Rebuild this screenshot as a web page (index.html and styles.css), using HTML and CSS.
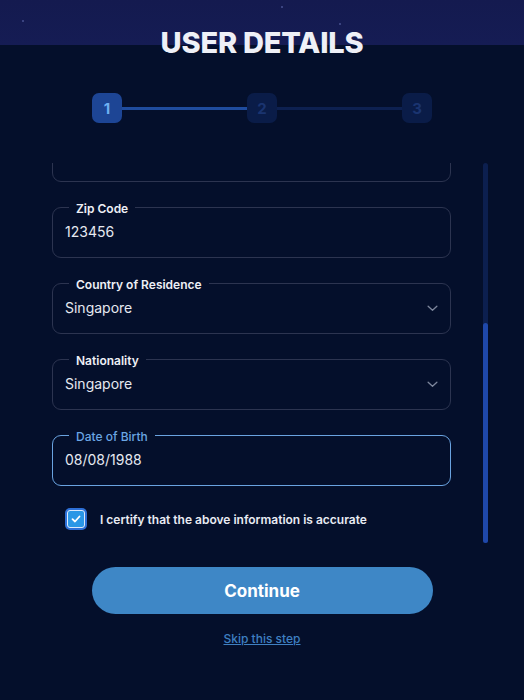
FILE: index.html
```html
<!DOCTYPE html>
<html lang="en">
<head>
<meta charset="utf-8">
<title>User Details</title>
<link rel="stylesheet" href="styles.css">
</head>
<body>
<div class="page">
  <header class="banner">
    <span class="star s1"></span><span class="star s2"></span><span class="star s3"></span>
  </header>
  <h1 class="title">USER DETAILS</h1>
  <div class="stepper">
    <div class="step active">1</div>
    <div class="line done"></div>
    <div class="step">2</div>
    <div class="line"></div>
    <div class="step">3</div>
  </div>
  <div class="scroll-wrap">
    <div class="viewport">
      <div class="form">
        <div class="field hidden-top"><span class="value">&nbsp;</span></div>
        <div class="field">
          <span class="label">Zip Code</span>
          <span class="value">123456</span>
        </div>
        <div class="field">
          <span class="label">Country of Residence</span>
          <span class="value">Singapore</span>
          <svg class="chev" viewBox="0 0 12 8" width="11" height="7"><path d="M1 1.5 L6 6 L11 1.5" fill="none" stroke="#7d869c" stroke-width="1.5" stroke-linecap="round" stroke-linejoin="round"/></svg>
        </div>
        <div class="field">
          <span class="label">Nationality</span>
          <span class="value">Singapore</span>
          <svg class="chev" viewBox="0 0 12 8" width="11" height="7"><path d="M1 1.5 L6 6 L11 1.5" fill="none" stroke="#7d869c" stroke-width="1.5" stroke-linecap="round" stroke-linejoin="round"/></svg>
        </div>
        <div class="field focus">
          <span class="label">Date of Birth</span>
          <span class="value">08/08/1988</span>
        </div>
        <label class="check">
          <span class="box"><svg viewBox="0 0 12 12" width="10" height="10"><path d="M2.5 6.2 L5 8.5 L9.5 3.5" fill="none" stroke="#fff" stroke-width="1.8" stroke-linecap="round" stroke-linejoin="round"/></svg></span>
          <span class="check-text">I certify that the above information is accurate</span>
        </label>
      </div>
    </div>
    <div class="scrollbar"><div class="thumb"></div></div>
  </div>
  <button class="continue">Continue</button>
  <a class="skip" href="#">Skip this step</a>
</div>
</body>
</html>
```
FILE: styles.css
```css
* { box-sizing: border-box; }
html, body { margin: 0; padding: 0; }
body {
  background: #040f2b;
  font-family: "Inter", "Noto Sans", sans-serif;
  color: #e9ecf4;
}
.page {
  width: 524px;
  height: 700px;
  position: relative;
  overflow: hidden;
  display: flex;
  flex-direction: column;
  align-items: center;
}
.banner {
  position: absolute;
  left: 0; top: 0;
  width: 524px;
  height: 45px;
  background: linear-gradient(180deg, #141a4f 0%, #151c54 100%);
}
.star { position: absolute; width: 2px; height: 2px; background: #3a4380; }
.s1 { left: 22px; top: 20px; }
.s2 { left: 281px; top: 6px; }
.s3 { left: 339px; top: 23px; }
.title {
  position: relative;
  margin: 27px 0 0;
  font-size: 29px;
  line-height: 32px;
  font-weight: 800;
  letter-spacing: -0.2px;
  color: #eef0f7;
}
.stepper {
  margin-top: 34px;
  display: flex;
  align-items: center;
  width: 340px;
}
.step {
  width: 30px;
  height: 30px;
  border-radius: 7px;
  background: #0a1c48;
  color: #1a3470;
  font-weight: 700;
  font-size: 15px;
  display: flex;
  align-items: center;
  justify-content: center;
  flex: none;
}
.step.active { background: #1d4595; color: #6fb0f2; }
.line { flex: 1; height: 3px; background: #0d2050; }
.line.done { background: #1f4c9e; }
.scroll-wrap {
  margin-top: 40px;
  align-self: stretch;
  display: flex;
  padding-left: 52px;
  height: 383px;
}
.viewport {
  width: 399px;
  overflow: hidden;
  height: 383px;
}
.form {
  margin-top: -32px;
  display: flex;
  flex-direction: column;
  gap: 25px;
}
.field {
  position: relative;
  height: 51px;
  border: 1px solid #2c3450;
  border-radius: 9px;
  display: flex;
  align-items: center;
  padding: 0 12px;
}
.field.focus { border-color: #6aa3e0; }
.label {
  position: absolute;
  top: -7px;
  left: 16px;
  padding: 0 7px;
  background: #040f2b;
  font-size: 12px;
  line-height: 16px;
  font-weight: 600;
  color: #eef0f6;
}
.field.focus .label { color: #6ba6e4; font-weight: 500; }
.value {
  font-size: 14px;
  color: #e6e9f1;
  margin-top: -2px;
}
.chev { position: absolute; right: 12px; top: 21px; }
.check {
  display: flex;
  align-items: center;
  gap: 13px;
  padding-left: 13px;
  margin-top: -3px;
}
.box {
  width: 22px;
  height: 22px;
  border-radius: 5px;
  background: #2d6fd6;
  padding: 2px;
  display: flex;
}
.box svg {
  flex: 1;
  width: auto;
  height: auto;
  border-radius: 3px;
  border: 1px solid #dbe9fb;
  background: #2a97e6;
  padding: 2px;
}
.check-text { font-size: 12px; font-weight: 600; color: #e8ebf3; }
.scrollbar {
  margin-left: 32px;
  width: 5px;
  height: 380px;
  border-radius: 3px;
  background: #0c1f4f;
  display: flex;
  flex-direction: column;
  justify-content: flex-end;
}
.thumb { height: 220px; border-radius: 3px; background: #1f48aa; }
.continue {
  margin-top: 21px;
  width: 341px;
  height: 47px;
  border: none;
  border-radius: 24px;
  background: #3e87c6;
  color: #fff;
  font-family: inherit;
  font-size: 17px;
  font-weight: 700;
}
.skip {
  margin-top: 17px;
  font-size: 12px;
  font-weight: 500;
  color: #3f80c2;
  text-decoration: underline;
}
```
